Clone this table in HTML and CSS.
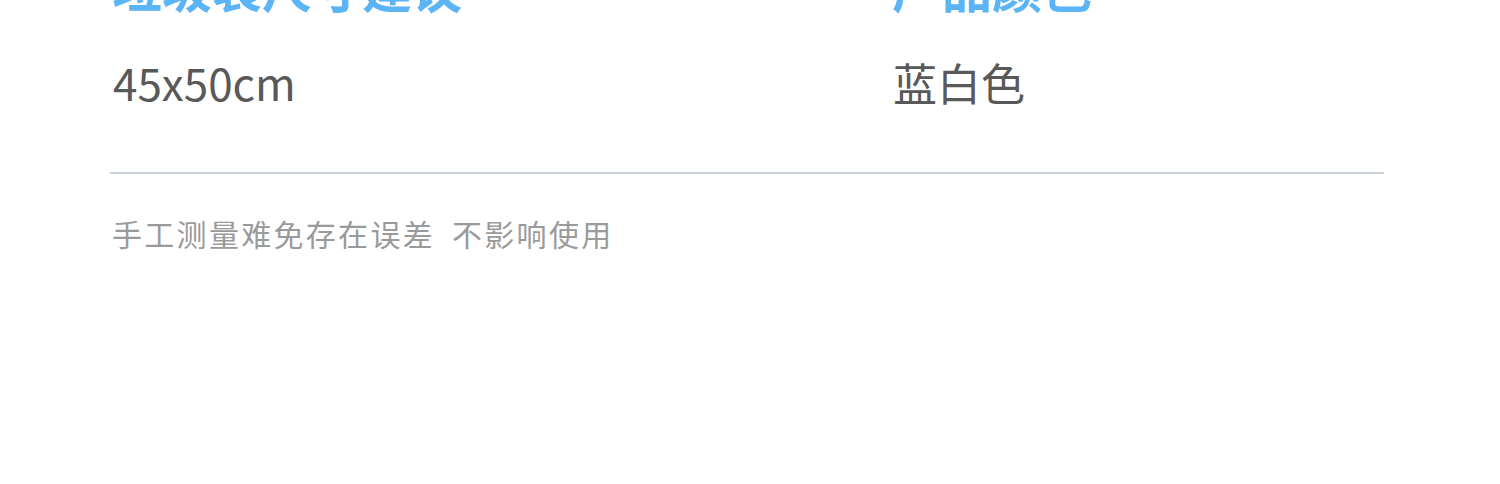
FILE: index.html
```html
<!DOCTYPE html>
<html lang="zh-CN">
<head>
<meta charset="utf-8">
<title>产品信息</title>
<link rel="stylesheet" href="styles.css">
</head>
<body>
<div class="wrap">
  <div class="row titles">
    <div class="title">垃圾袋尺寸建议</div>
    <div class="title title-right">产品颜色</div>
  </div>
  <div class="row values">
    <div class="value">45x50cm</div>
    <div class="value value-right">蓝白色</div>
  </div>
  <div class="divider"></div>
  <p class="note">手工测量难免存在误差 不影响使用</p>
</div>
</body>
</html>
```
FILE: styles.css
```css
html, body {
  margin: 0;
  padding: 0;
  background: #ffffff;
  overflow: hidden;
}
body {
  width: 1500px;
  height: 484px;
  font-family: "Noto Sans CJK SC", "Noto Sans", sans-serif;
}
.wrap {
  margin-left: 110px;
  width: 1274px;
}
.row {
  display: grid;
  grid-template-columns: 780px 1fr;
}
.titles {
  margin-top: -39px;
}
.title {
  font-size: 50px;
  line-height: 50px;
  font-weight: 700;
  color: #5ab4f6;
  white-space: nowrap;
  padding-left: 2px;
}
.values {
  margin-top: 47px;
}
.value {
  font-size: 44px;
  line-height: 48px;
  color: #595959;
  padding-left: 3px;
}
.value-right {
  padding-left: 3px;
}
.divider {
  margin-top: 66px;
  height: 2px;
  background: #c9d1db;
}
.note {
  margin: 44px 0 0 0;
  padding-left: 2px;
  font-size: 30px;
  line-height: 30px;
  color: #9a9a9a;
  letter-spacing: 2.3px;
  word-spacing: 8px;
  white-space: nowrap;
}
```
